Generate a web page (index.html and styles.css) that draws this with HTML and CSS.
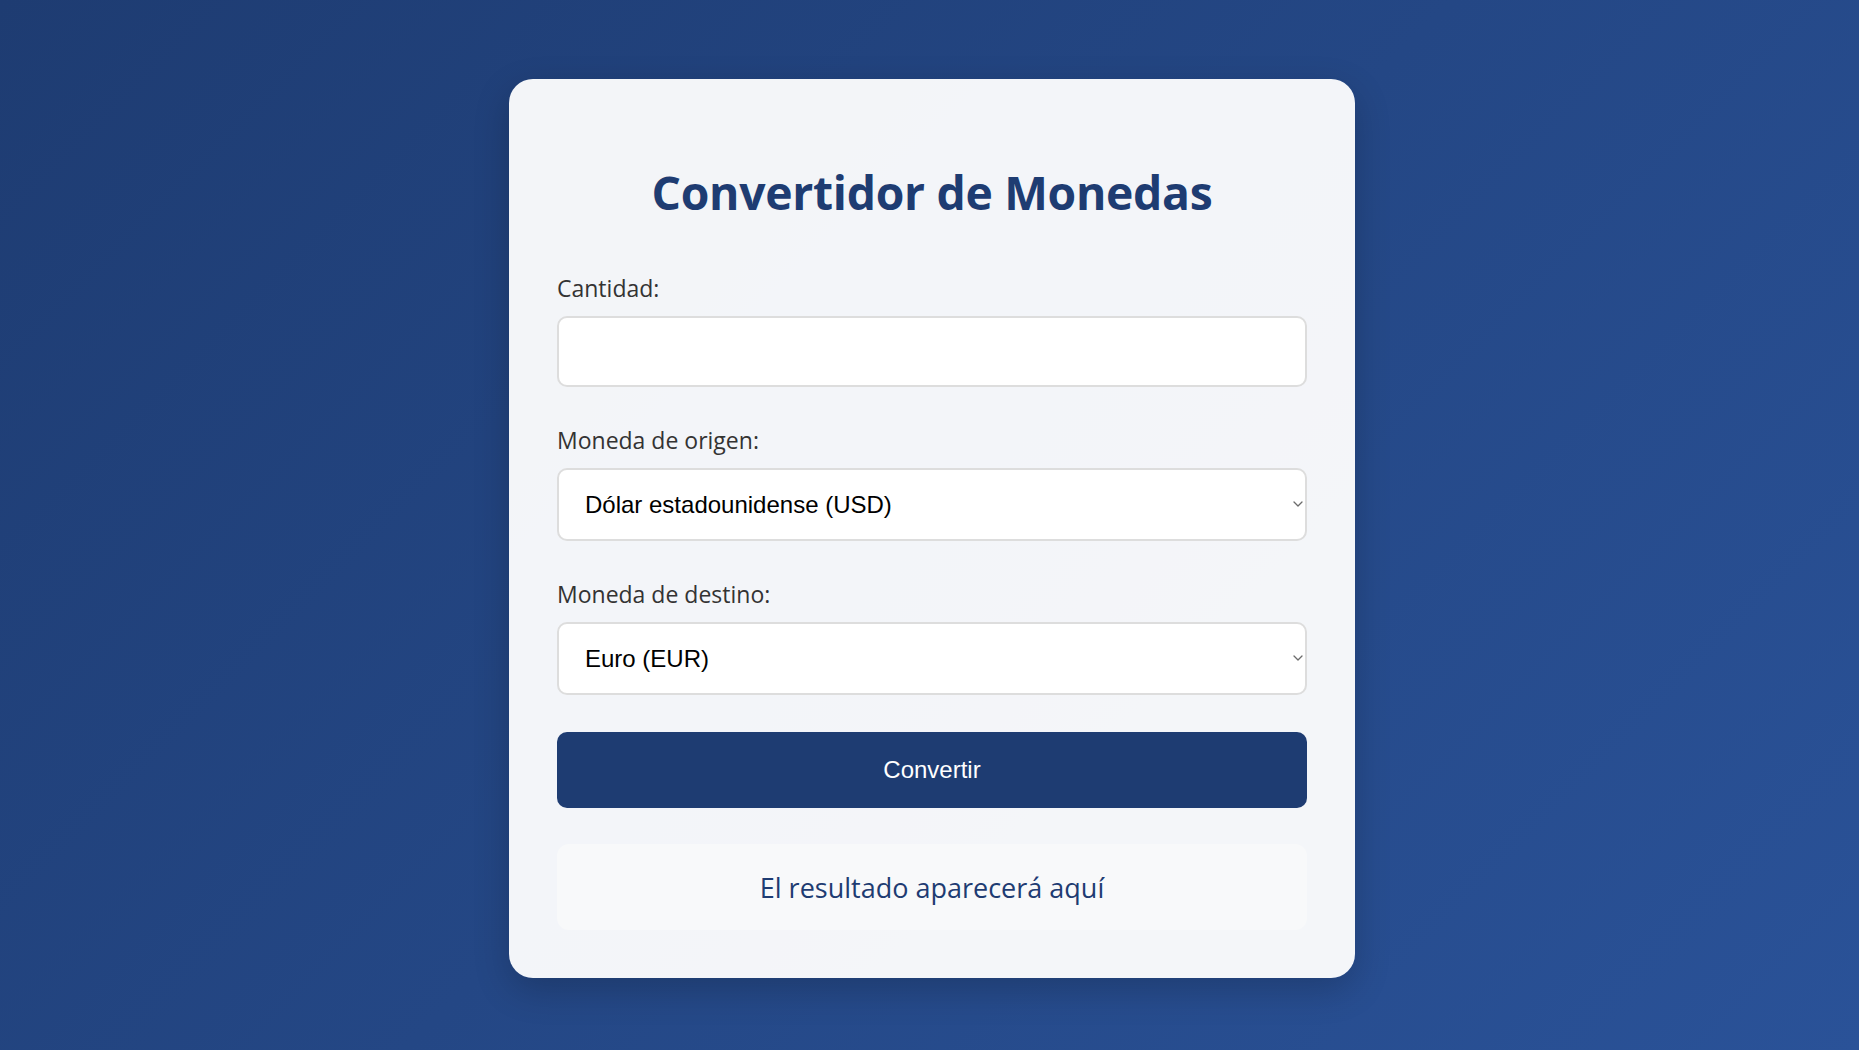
FILE: index.html
```html
<!DOCTYPE html>
<html lang="es">
<head>
<meta charset="utf-8">
<title>Convertidor de Monedas</title>
<link rel="stylesheet" href="styles.css">
</head>
<body>
  <main class="card">
    <h1 class="title">Convertidor de Monedas</h1>
    <div class="field">
      <label class="label" for="amount">Cantidad:</label>
      <input class="control control-input" id="amount" type="number">
    </div>
    <div class="field">
      <label class="label" for="from">Moneda de origen:</label>
      <div class="select-wrap">
        <select class="control control-select" id="from">
          <option>Dólar estadounidense (USD)</option>
          <option>Euro (EUR)</option>
        </select>
        <svg class="chevron" width="10" height="6" viewBox="0 0 10 6" aria-hidden="true"><path d="M1 1l4 4 4-4" fill="none" stroke="#6b6b6b" stroke-width="1.3" stroke-linecap="round" stroke-linejoin="round"/></svg>
      </div>
    </div>
    <div class="field">
      <label class="label" for="to">Moneda de destino:</label>
      <div class="select-wrap">
        <select class="control control-select" id="to">
          <option>Euro (EUR)</option>
          <option>Dólar estadounidense (USD)</option>
        </select>
        <svg class="chevron" width="10" height="6" viewBox="0 0 10 6" aria-hidden="true"><path d="M1 1l4 4 4-4" fill="none" stroke="#6b6b6b" stroke-width="1.3" stroke-linecap="round" stroke-linejoin="round"/></svg>
      </div>
    </div>
    <button class="convert" type="button">Convertir</button>
    <div class="result">El resultado aparecerá aquí</div>
  </main>
</body>
</html>
```
FILE: styles.css
```css
html, body {
  height: 100%;
}

body {
  margin: 0;
  padding-top: 7px;
  padding-left: 5px;
  box-sizing: border-box;
  min-height: 100vh;
  display: flex;
  align-items: center;
  justify-content: center;
  background: linear-gradient(135deg, #1e3c72 0%, #2a5298 100%);
  font-family: "Open Sans", "Noto Sans", sans-serif;
}

.card {
  width: 846px;
  box-sizing: border-box;
  padding: 48px;
  background: rgba(255, 255, 255, 0.95);
  border-radius: 24px;
  box-shadow: 0 12px 36px rgba(0, 0, 0, 0.2);
  display: flex;
  flex-direction: column;
}

.title {
  margin: 33.5px 0 47px;
  font-size: 46.3px;
  line-height: 64px;
  font-weight: 700;
  color: #1e3c72;
  text-align: center;
  letter-spacing: -0.3px;
}

.field {
  display: flex;
  flex-direction: column;
  margin-bottom: 37.5px;
}

.label {
  font-size: 23px;
  line-height: 32px;
  color: #333;
  margin-bottom: 12px;
}

.select-wrap {
  position: relative;
}

.chevron {
  position: absolute;
  right: 4px;
  top: 50%;
  margin-top: -3px;
  pointer-events: none;
}

.control {
  box-sizing: border-box;
  width: 100%;
  border: 2px solid #ddd;
  border-radius: 10px;
  background: #fff;
  font-family: "Liberation Sans", Arial, sans-serif;
  font-size: 24px;
  color: #000;
  margin: 0;
  display: block;
}

.control-input {
  height: 71px;
  padding: 0 18px;
}

.control-select {
  height: 72.5px;
  padding: 0 18px 0 26px;
  appearance: none;
  -webkit-appearance: none;
}

.convert {
  height: 76px;
  border: none;
  border-radius: 10px;
  background: #1e3c72;
  color: #fff;
  font-family: "Liberation Sans", Arial, sans-serif;
  font-size: 24px;
  cursor: pointer;
  margin: 0 0 36px;
}

.result {
  padding: 25px 24px 23px;
  background: #f8f9fa;
  border-radius: 12px;
  text-align: center;
  font-size: 27px;
  line-height: 38px;
  color: #1e3c72;
}
```
